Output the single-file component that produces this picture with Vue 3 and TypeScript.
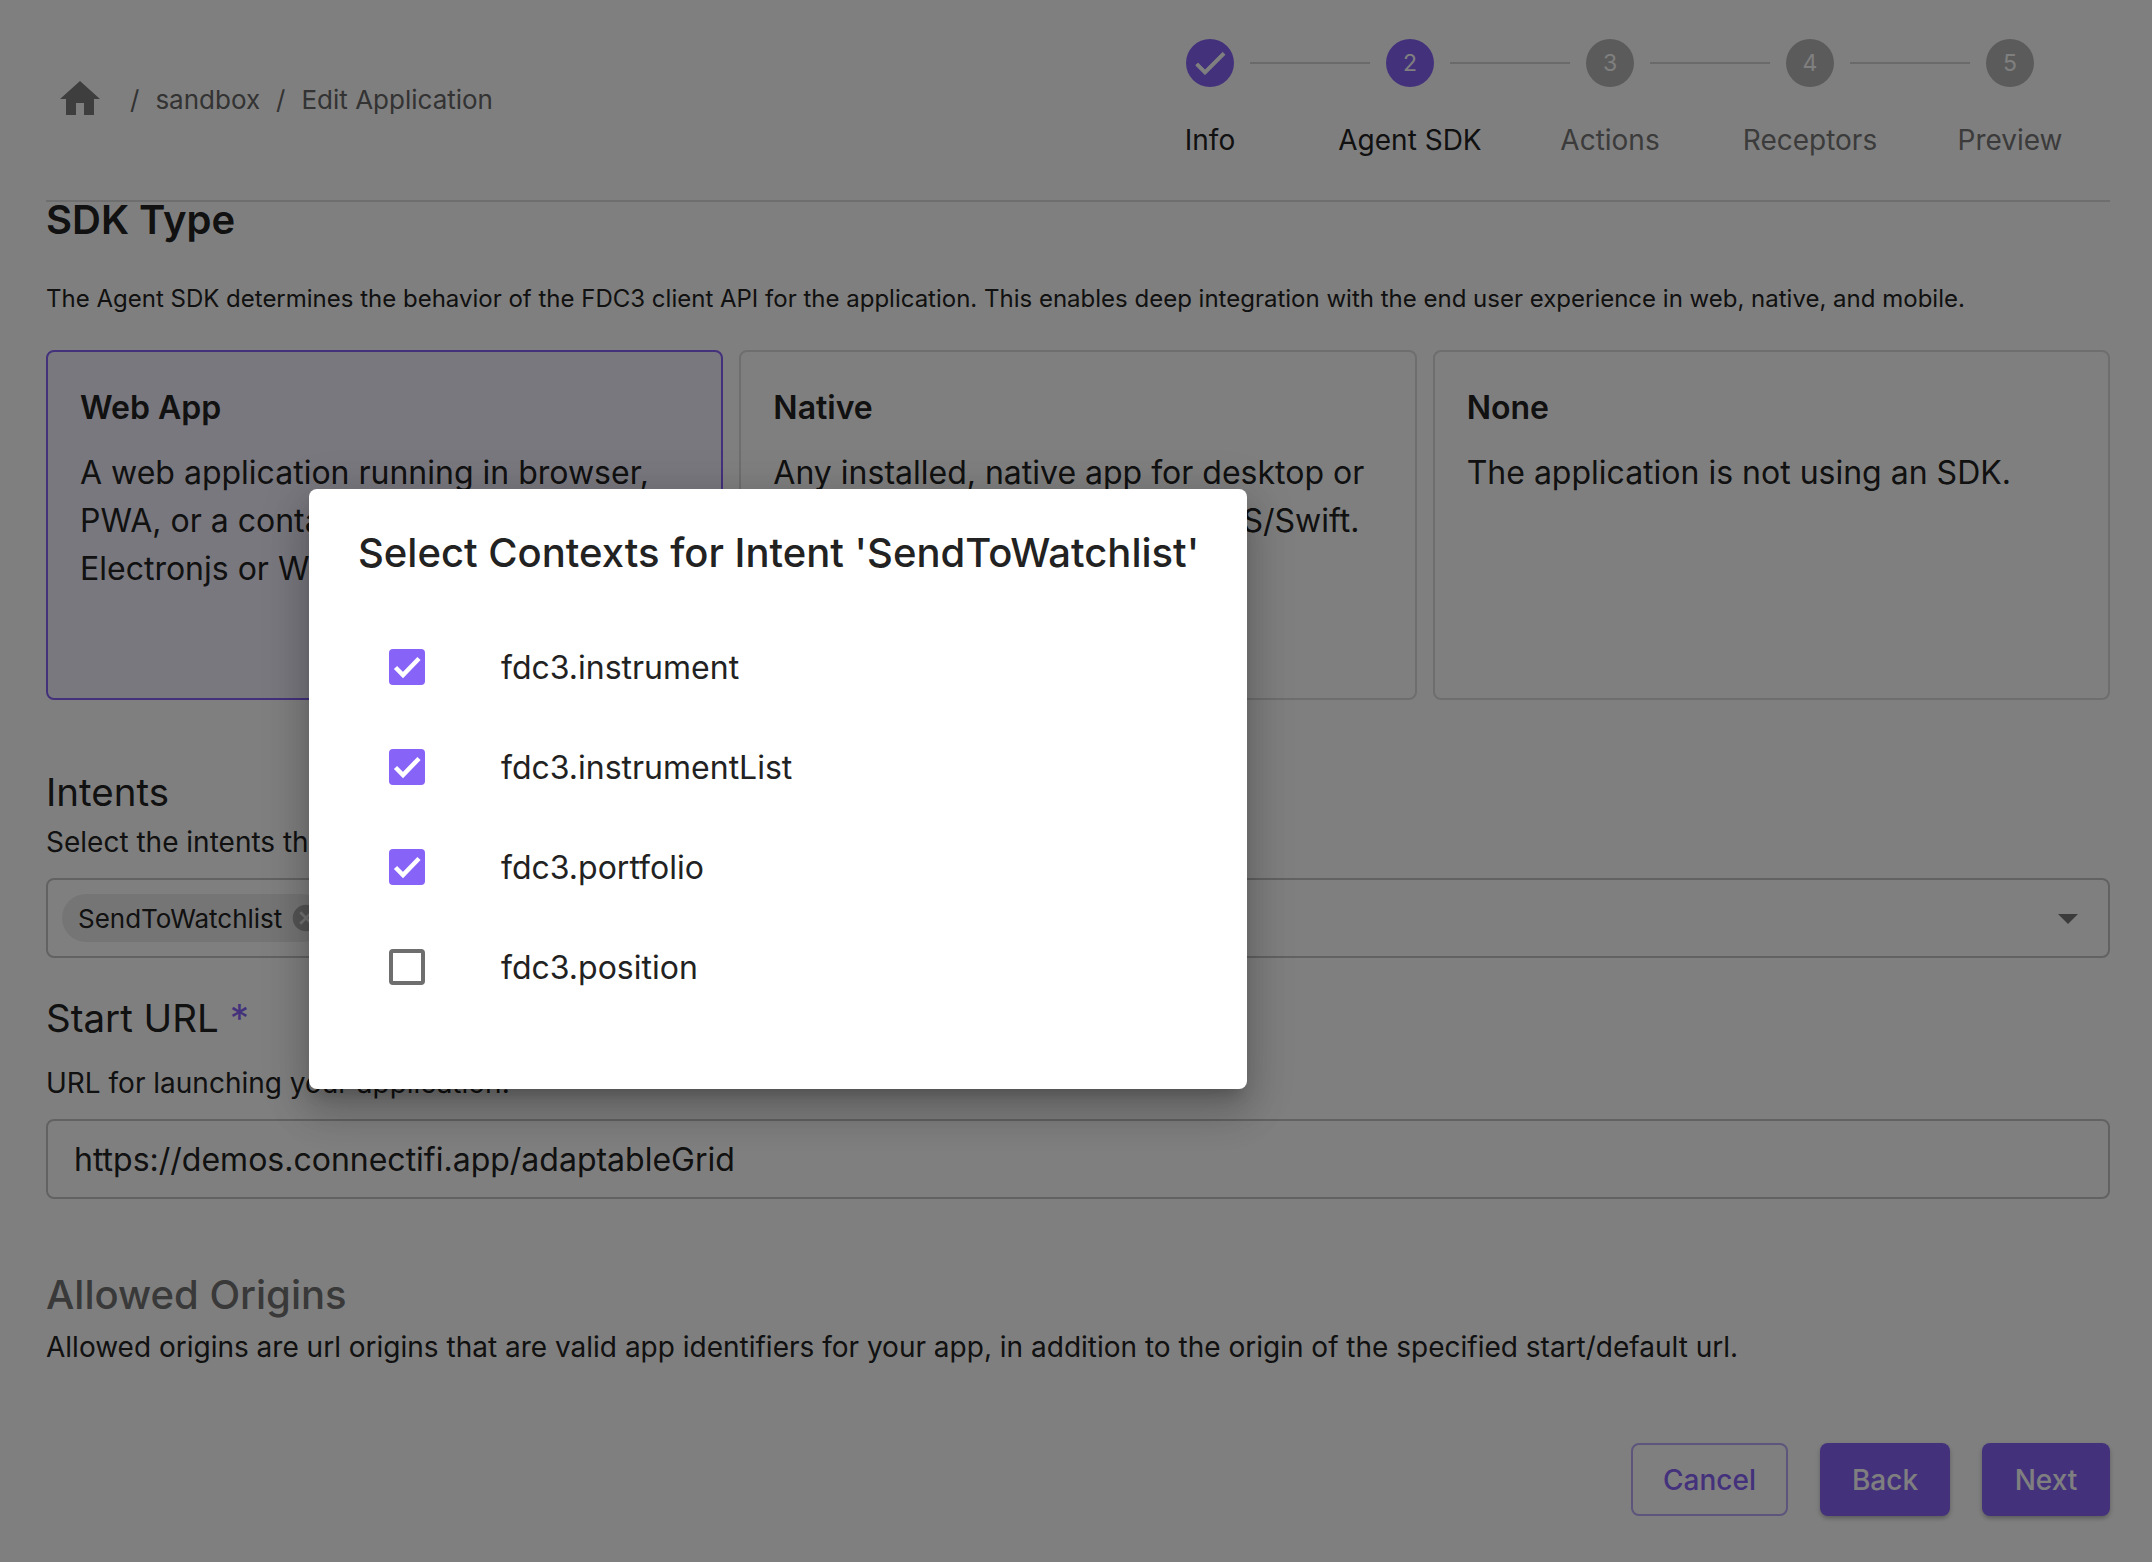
<template>
  <div class="page">
    <header class="top">
      <nav class="crumbs">
        <svg class="home" viewBox="0 0 24 24"><path d="M10 20v-6h4v6h5v-8h3L12 3 2 12h3v8z" /></svg>
        <span class="sep first">/</span>
        <span>sandbox</span>
        <span class="sep">/</span>
        <span>Edit Application</span>
      </nav>
      <div class="stepper">
        <div v-for="(step, i) in steps" :key="step" class="step">
          <div class="step-head">
            <span class="line left" :class="{ hidden: i === 0 }" />
            <span class="dot" :class="{ on: i < 2 }">
              <svg v-if="i === 0" viewBox="0 0 24 24"><path d="M9 16.17 4.83 12l-1.42 1.41L9 19 21 7l-1.41-1.41z" /></svg>
              <template v-else>{{ i + 1 }}</template>
            </span>
            <span class="line right" :class="{ hidden: i === steps.length - 1 }" />
          </div>
          <div class="step-label" :class="{ on: i < 2 }">{{ step }}</div>
        </div>
      </div>
    </header>

    <h2 class="sdk-title">SDK Type</h2>
    <p class="sdk-desc">The Agent SDK determines the behavior of the FDC3 client API for the application. This enables deep integration with the end user experience in web, native, and mobile.</p>

    <div class="cards">
      <div v-for="(card, i) in cards" :key="card.title" class="card" :class="{ selected: i === 0 }">
        <div class="card-title">{{ card.title }}</div>
        <div class="card-body">{{ card.body }}</div>
      </div>
    </div>

    <h3 class="section intents">Intents</h3>
    <p class="hint intents-hint">Select the intents this application listens for.</p>
    <div class="select">
      <span class="chip">
        SendToWatchlist
        <svg class="chip-x" viewBox="0 0 24 24"><path d="M12 2C6.47 2 2 6.47 2 12s4.47 10 10 10 10-4.47 10-10S17.53 2 12 2zm5 13.59L15.59 17 12 13.41 8.41 17 7 15.59 10.59 12 7 8.41 8.41 7 12 10.59 15.59 7 17 8.41 13.41 12 17 15.59z" /></svg>
      </span>
      <svg class="caret" viewBox="0 0 24 24"><path d="M7 10l5 5 5-5z" /></svg>
    </div>

    <h3 class="section start">Start URL <span class="req">*</span></h3>
    <p class="hint start-hint">URL for launching your application.</p>
    <div class="input">https://demos.connectifi.app/adaptableGrid</div>

    <h3 class="section origins">Allowed Origins</h3>
    <p class="hint origins-hint">Allowed origins are url origins that are valid app identifiers for your app, in addition to the origin of the specified start/default url.</p>

    <div class="actions">
      <button class="btn outline">Cancel</button>
      <button class="btn solid back">Back</button>
      <button class="btn solid next">Next</button>
    </div>

    <div class="scrim">
      <div class="dialog">
        <h2 class="dialog-title">Select Contexts for Intent 'SendToWatchlist'</h2>
        <ul class="ctx-list">
          <li v-for="ctx in contexts" :key="ctx.name" class="ctx">
            <span class="box" :class="{ checked: ctx.checked }">
              <svg v-if="ctx.checked" viewBox="0 0 36 36"><path d="M6.5 18.5 14 26 30 9.5" /></svg>
            </span>
            <span class="ctx-name">{{ ctx.name }}</span>
          </li>
        </ul>
      </div>
    </div>
  </div>
</template>

<script setup lang="ts">
const steps: string[] = ['Info', 'Agent SDK', 'Actions', 'Receptors', 'Preview']

const cards = [
  {
    title: 'Web App',
    body: 'A web application running in browser, PWA, or a containerized app such as Electronjs or WebView2.',
  },
  {
    title: 'Native',
    body: 'Any installed, native app for desktop or mobile, such as C#, Java, or iOS/Swift.',
  },
  {
    title: 'None',
    body: 'The application is not using an SDK.',
  },
]

const contexts = [
  { name: 'fdc3.instrument', checked: true },
  { name: 'fdc3.instrumentList', checked: true },
  { name: 'fdc3.portfolio', checked: true },
  { name: 'fdc3.position', checked: false },
]
</script>

<style>
html,
body {
  margin: 0;
  background: #fff;
}
</style>

<style scoped>
* {
  box-sizing: border-box;
}

.page {
  position: relative;
  width: 2152px;
  height: 1562px;
  padding: 0 42px 0 46px;
  overflow: hidden;
  font-family: Inter, "Liberation Sans", sans-serif;
  color: #222;
  background: #fff;
}

.top {
  display: flex;
  justify-content: space-between;
  height: 202px;
  padding-top: 39px;
  border-bottom: 2px solid #dcdcdc;
}

.crumbs {
  display: flex;
  align-items: center;
  height: 48px;
  margin-top: 36px;
  padding-left: 10px;
  font-size: 26px;
  color: #666;
}

.home {
  width: 48px;
  height: 48px;
  fill: #7c7c7c;
  margin-right: 26px;
}

.sep {
  margin: 0 16px;
}

.sep.first {
  margin: 0 16px 0 0;
}

.stepper {
  display: flex;
}

.step {
  width: 200px;
}

.step-head {
  display: flex;
  align-items: center;
  height: 48px;
}

.line {
  flex: 1;
  height: 2px;
  background: #d4d4d4;
}

.line.left {
  margin-right: 16px;
}

.line.right {
  margin-left: 16px;
}

.line.hidden {
  visibility: hidden;
}

.dot {
  display: flex;
  align-items: center;
  justify-content: center;
  width: 48px;
  height: 48px;
  border-radius: 50%;
  background: #b6b6b6;
  color: #fff;
  font-size: 23px;
}

.dot.on {
  background: #8763f8;
}

.dot svg {
  width: 40px;
  height: 40px;
  fill: #fff;
  stroke: #fff;
  stroke-width: 0.5;
}

.step-label {
  margin-top: 36px;
  line-height: 34px;
  font-size: 28px;
  text-align: center;
  color: #777;
}

.step-label.on {
  color: #222;
}

.sdk-title {
  margin: 1px 0 0;
  font-size: 40px;
  line-height: 34px;
  font-weight: 600;
  color: #222;
}

.sdk-desc {
  margin: 44px 0 0;
  font-size: 24px;
  line-height: 36px;
}

.cards {
  display: grid;
  grid-template-columns: repeat(3, 1fr);
  gap: 16px;
  margin-top: 33px;
}

.card {
  height: 350px;
  padding: 36px 32px 0;
  border: 2px solid #dcdcdc;
  border-radius: 8px;
}

.card.selected {
  border-color: #8763f8;
  background: #f3f0fe;
}

.card-title {
  font-size: 32px;
  line-height: 40px;
  font-weight: 600;
}

.card-body {
  margin-top: 21px;
  font-size: 32px;
  line-height: 48px;
}

.section {
  margin: 0;
  font-size: 38.5px;
  line-height: 48px;
  font-weight: 400;
}

.hint {
  margin: 0;
  font-size: 28px;
  line-height: 36px;
}

.intents {
  margin-top: 68px;
}

.intents-hint {
  margin-top: 8px;
}

.select {
  display: flex;
  align-items: center;
  justify-content: space-between;
  height: 80px;
  margin-top: 18px;
  padding: 0 14px;
  border: 2px solid #c4c4c4;
  border-radius: 8px;
}

.chip {
  display: flex;
  align-items: center;
  height: 48px;
  padding: 0 4px 0 16px;
  border-radius: 24px;
  background: #ebebeb;
  font-size: 26px;
  color: #222;
}

.chip-x {
  width: 32px;
  height: 32px;
  margin-left: 8px;
  fill: #aaa;
}

.caret {
  width: 48px;
  height: 48px;
  margin-right: 2px;
  fill: #777;
}

.req {
  color: #8763f8;
}

.start {
  margin-top: 36px;
}

.start-hint {
  margin-top: 23px;
}

.input {
  display: flex;
  align-items: center;
  height: 80px;
  margin-top: 18px;
  padding: 0 26px;
  border: 2px solid #c4c4c4;
  border-radius: 8px;
  font-size: 32px;
}

.origins {
  margin-top: 72px;
  font-size: 40px;
  color: #727272;
  font-weight: 500;
}

.origins-hint {
  margin-top: 10px;
}

.actions {
  display: flex;
  justify-content: flex-end;
  gap: 32px;
  margin-top: 78px;
}

.btn {
  height: 73px;
  border-radius: 8px;
  font-family: inherit;
  font-size: 28px;
  font-weight: 500;
}

.btn.outline {
  width: 157px;
  border: 2px solid #bcaaf8;
  background: transparent;
  color: #8763f8;
}

.btn.solid {
  border: 0;
  background: #8763f8;
  color: #fff;
  box-shadow: 0 3px 4px -1px rgba(0, 0, 0, 0.2), 0 2px 6px rgba(0, 0, 0, 0.14);
}

.btn.back {
  width: 130px;
}

.btn.next {
  width: 128px;
}

.scrim {
  position: absolute;
  inset: 0;
  background: rgba(0, 0, 0, 0.5);
}

.dialog {
  position: absolute;
  left: 309px;
  top: 489px;
  width: 938px;
  height: 600px;
  padding: 37px 49px 0;
  border-radius: 8px;
  background: #fff;
  box-shadow: 0 11px 15px -7px rgba(0, 0, 0, 0.2), 0 24px 38px 3px rgba(0, 0, 0, 0.14), 0 9px 46px 8px rgba(0, 0, 0, 0.12);
}

.dialog-title {
  margin: 0;
  font-size: 40px;
  line-height: 54px;
  font-weight: 500;
  white-space: nowrap;
}

.ctx-list {
  margin: 37px 0 0;
  padding: 0;
  list-style: none;
}

.ctx {
  display: flex;
  align-items: center;
  height: 100px;
  padding-left: 31px;
}

.box {
  width: 36px;
  height: 36px;
  border: 4px solid #6e6e6e;
  border-radius: 4px;
}

.box.checked {
  border: 0;
  background: #8763f8;
}

.box svg {
  display: block;
  width: 36px;
  height: 36px;
  fill: none;
  stroke: #fff;
  stroke-width: 4.5;
}

.ctx-name {
  margin-left: 76px;
  font-size: 32px;
}
</style>
